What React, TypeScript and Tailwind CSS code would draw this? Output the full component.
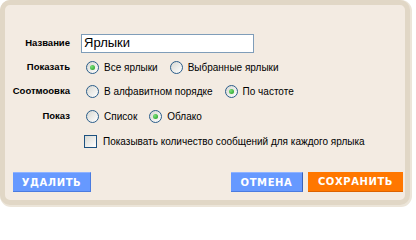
import React from "react";

function Radio({ checked }: { checked?: boolean }) {
  return (
    <span className="relative inline-flex h-[13px] w-[13px] shrink-0 items-center justify-center rounded-full border border-[#2a5d8a] bg-[linear-gradient(135deg,#d8d8d2,#ffffff)]">
      {checked && (
        <span className="h-[5px] w-[5px] rounded-full bg-[radial-gradient(circle_at_35%_35%,#7be07b,#1d9a1d)]" />
      )}
    </span>
  );
}

function Opt({ label, checked, last }: { label: string; checked?: boolean; last?: boolean }) {
  return (
    <span className={"flex items-center " + (last ? "" : "mr-[12px]")}>
      <Radio checked={checked} />
      <span className="ml-[5px]">{label}</span>
    </span>
  );
}

function Row({ label, h, children }: { label: string; h: string; children: React.ReactNode }) {
  return (
    <div className={"flex items-center " + h}>
      <div className="w-[65px] text-right text-[9.5px] font-bold text-black">{label}</div>
      <div className="ml-[11px] flex items-center">{children}</div>
    </div>
  );
}

export default function App() {
  return (
    <div className="h-[209px] w-[416px] bg-white font-['Liberation_Sans',sans-serif] text-[10px] text-black">
      <div className="flex h-[205px] w-[410px] flex-col rounded-[10px] border-[5px] border-[#e1d7c6] bg-[#f3ebe2] shadow-[1px_1px_0_1px_#ece5d9]">
        <div className="mt-[26px] flex flex-col">
          <Row label="Название" h="h-[24px]">
            <div className="flex h-[19px] w-[173px] items-center border border-[#7f9db9] bg-white pl-[2px] text-[13px] text-black">
              Ярлыки
            </div>
          </Row>
          <Row label="Показать" h="h-[24px]">
            <span className="ml-[5px] flex items-center">
              <Opt label="Все ярлыки" checked />
              <Opt label="Выбранные ярлыки" last />
            </span>
          </Row>
          <Row label="Соотмоовка" h="h-[25px]">
            <span className="ml-[5px] flex items-center">
              <Opt label="В алфавитном порядке" />
              <Opt label="По частоте" checked last />
            </span>
          </Row>
          <Row label="Показ" h="h-[25px]">
            <span className="ml-[5px] flex items-center">
              <Opt label="Список" />
              <Opt label="Облако" checked last />
            </span>
          </Row>
          <div className="flex h-[24px] items-center">
            <div className="ml-[79px] flex items-center">
              <span className="h-[13px] w-[13px] border border-[#1c5180] bg-[linear-gradient(135deg,#d8d8d2,#ffffff)]" />
              <span className="ml-[6px]">Показывать количество сообщений для каждого ярлыка</span>
            </div>
          </div>
        </div>
        <div className="mt-[19px] flex items-center pl-[8px] pr-[2px] font-['DejaVu_Sans',sans-serif]">
          <button className="flex h-[20px] w-[78px] items-center justify-center border-t border-r border-b border-t-[#8fb3ff] border-r-[#4a7be0] border-b-[#4a7be0] bg-[#6699ff] text-[10px] font-bold tracking-[0.6px] text-white">
            УДАЛИТЬ
          </button>
          <div className="flex-1" />
          <button className="flex h-[20px] w-[72px] items-center justify-center border-t border-r border-b border-t-[#8fb3ff] border-r-[#3a62b8] border-b-[#4a7be0] bg-[#6699ff] text-[10px] font-bold tracking-[0.6px] text-white">
            ОТМЕНА
          </button>
          <button className="ml-[5px] flex h-[20px] w-[95px] items-center justify-center border-b border-b-[#dd6200] bg-[#ff7700] text-[10px] font-bold tracking-[0.6px] text-white">
            СОХРАНИТЬ
          </button>
        </div>
      </div>
    </div>
  );
}
